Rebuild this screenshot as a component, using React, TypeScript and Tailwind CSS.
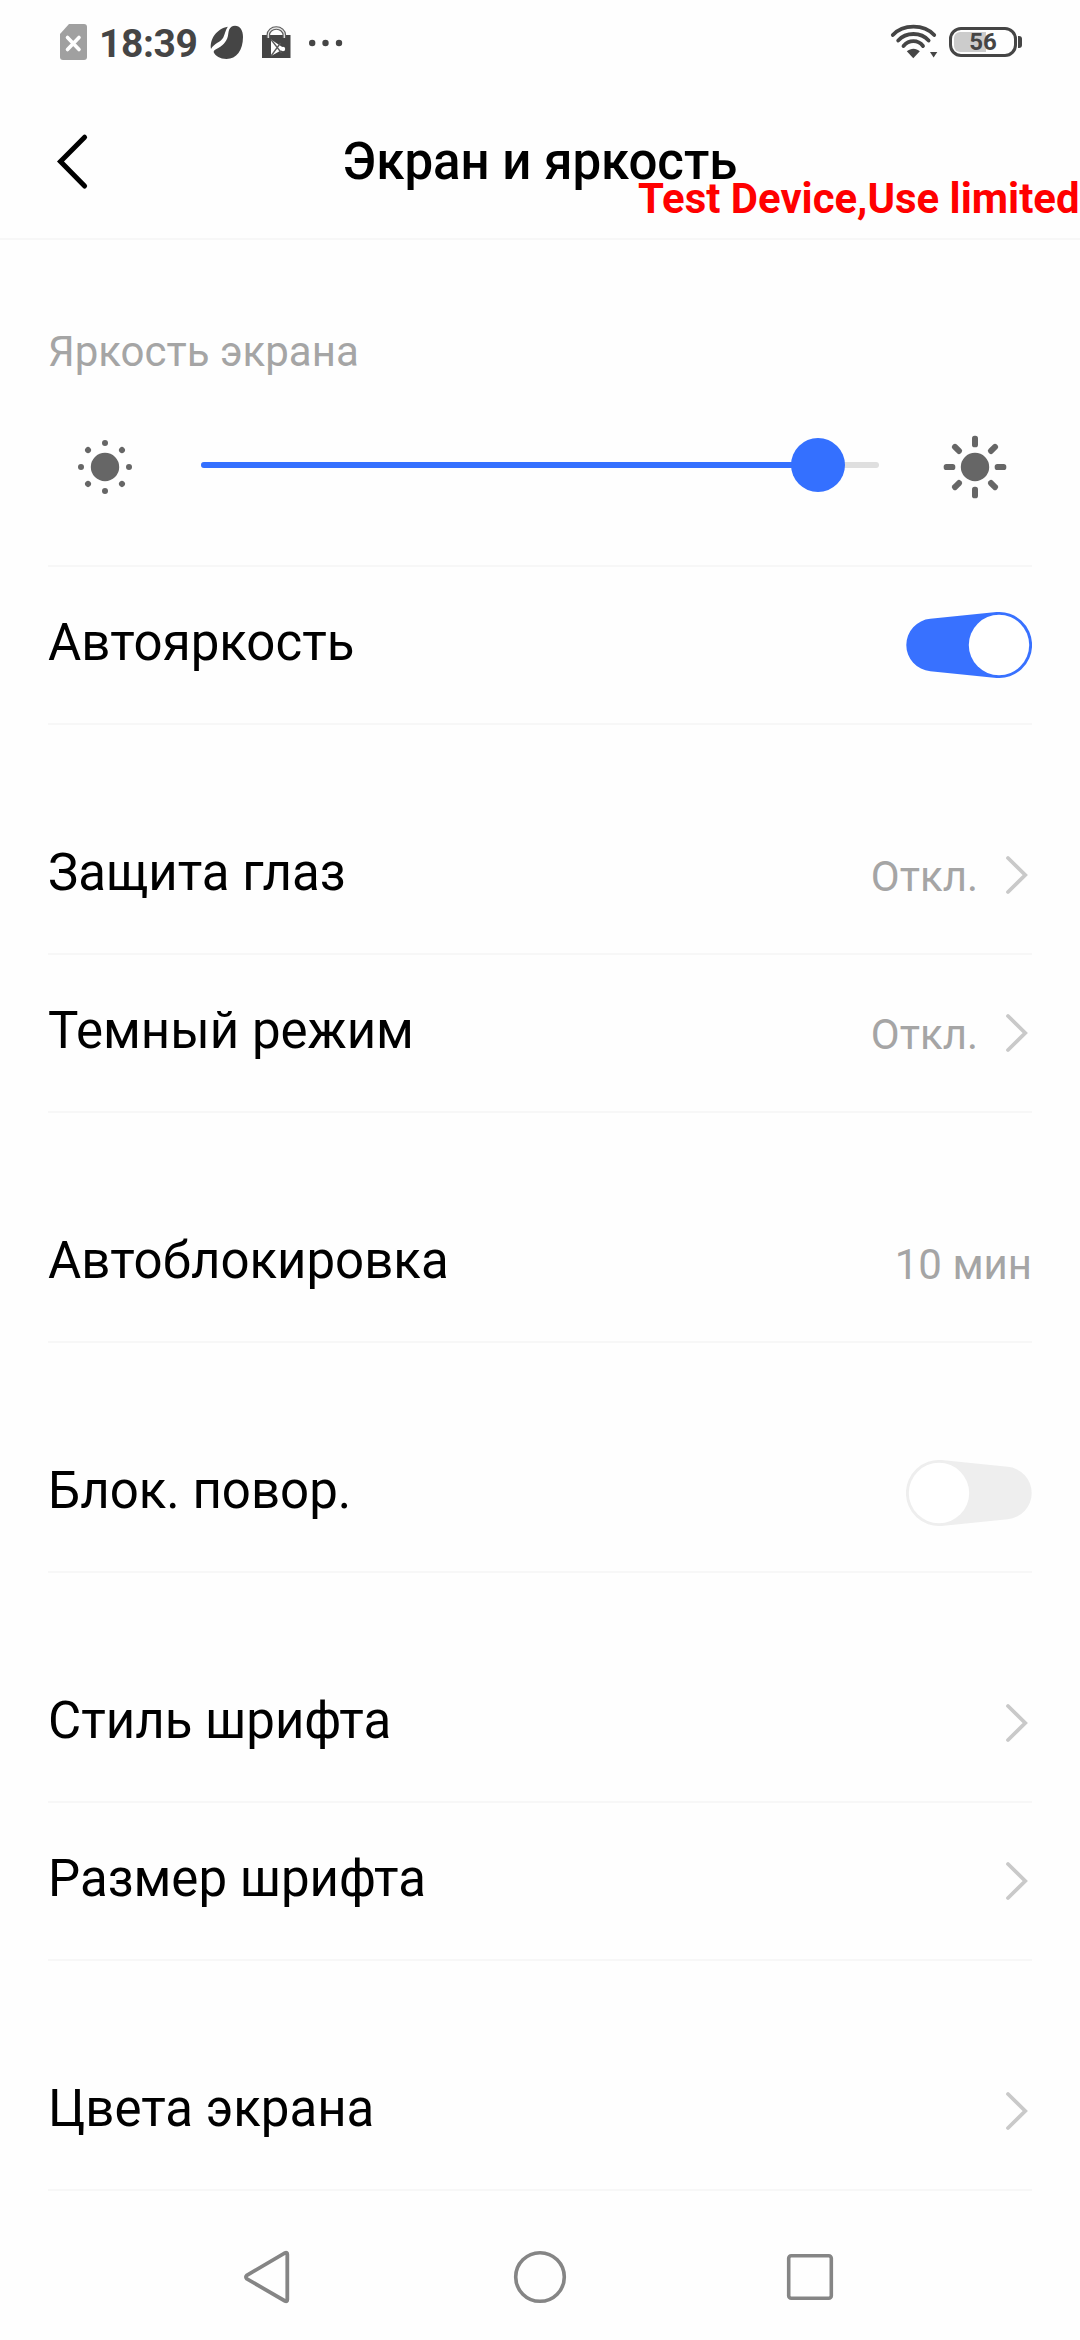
import type { ReactNode } from "react";

function StatusBar() {
  return (
    <div className="flex h-[84px] items-start justify-between pt-[22px] pr-[58px] pl-[58px] text-[#454545]">
      <div className="flex h-[40px] items-start">
        <svg className="h-[40px] w-[32px]" viewBox="58 22 32 40">
          <path d="M69 24H84a3 3 0 0 1 3 3V57a3 3 0 0 1-3 3H63a3 3 0 0 1-3-3V34Z" fill="#a0a0a0" />
          <path d="M67.5 37.5l11.5 12M79 37.5l-11.5 12" stroke="#fff" strokeWidth="3.6" strokeLinecap="round" />
        </svg>
        <span className="mt-[1px] ml-[9px] w-[101px] text-[39px] leading-[42px] font-bold tracking-[-0.4px]">18:39</span>
        <svg className="ml-[8px] h-[40px] w-[38px]" viewBox="208 22 38 40" fill="currentColor">
          <path d="M229.200 29.500C230.500 27 232 25.700 235 25.700C240 25.700 243 30 243 37C243 50 236.500 59 226.500 59C220 59 215.500 56 213.800 52.500C213.500 51 214 50.400 216 49.300C222.500 46 226.500 42 227.800 36.500C228.300 34 228.500 31.500 229.200 29.500Z" />
          <path d="M211 48.900C209.500 39 217 28.500 227.800 26.800C225.500 30 225 34 223.300 37.500C221 42 214 43.500 211 48.900Z" />
        </svg>
        <svg className="ml-[13px] h-[40px] w-[34px]" viewBox="259 22 34 40">
          <path d="M262 35H290.500V58H262Z" fill="currentColor" />
          <path d="M268.300 38V35a8 7 0 0 1 16 0V38" fill="none" stroke="#5c5c5c" strokeWidth="3.600" />
          <path d="M268.300 38V35a8 7 0 0 1 16 0V38" fill="none" stroke="#e4e4e4" strokeWidth="1.300" />
          <path d="M271 39.500V56L284.500 48.500Z" fill="#fff" />
          <path d="M271 39.500L281.500 53M271 56L280.500 43" stroke="#5a5a5a" strokeWidth="1.300" />
          <circle cx="283" cy="49" r="2.200" fill="#fff" />
        </svg>
        <svg className="ml-[16px] h-[40px] w-[36px]" viewBox="309 22 36 40">
          <circle cx="312.200" cy="43" r="3.200" fill="currentColor" />
          <circle cx="325.500" cy="43" r="3.200" fill="currentColor" />
          <circle cx="339" cy="43" r="3.200" fill="currentColor" />
        </svg>
      </div>
      <div className="flex h-[40px] items-start">
        <svg className="h-[40px] w-[52px]" viewBox="888 22 52 40">
          <g fill="none" stroke="currentColor" strokeWidth="3.800" strokeLinecap="round">
            <path d="M891.800 35C902 23.800 923 23.800 933.200 35" />
            <path d="M897.200 40.500C905 31.800 920 31.800 927.600 40.500" />
            <path d="M902.500 46C908 39.600 917 39.600 922 46" />
          </g>
          <path d="M905.800 51.300C910 47.800 915 47.800 918.800 51.300L912.300 58.300Z" fill="currentColor" />
          <path d="M929 52H936.300L932.600 57.500Z" fill="currentColor" />
        </svg>
        <div className="mt-[5px] ml-[8px] flex items-center">
          <div className="relative flex h-[30px] w-[68px] items-center justify-center rounded-[12px] border-[3px] border-[#454545]">
            <div className="absolute top-[2px] left-[2px] h-[20px] w-[32px] rounded-l-[6px] bg-[#cccccc]" />
            <span className="relative text-[24px] leading-[25px] font-bold">56</span>
          </div>
          <div className="ml-[1px] h-[12px] w-[4px] rounded-r-[3px] bg-[#454545]" />
        </div>
      </div>
    </div>
  );
}

function Header() {
  return (
    <header className="relative flex h-[156px] items-start justify-center border-b-2 border-[#f7f7f7] pt-[48px]">
      <button aria-label="Назад" className="absolute top-[48px] left-[50px]">
        <svg className="h-[60px] w-[44px]" viewBox="50 132 44 60" fill="none">
          <path d="M84.600 137.200L60.500 161.600L84.600 186" stroke="#000" strokeWidth="5" strokeLinecap="round" />
        </svg>
      </button>
      <h1 className="text-[51px] leading-[60px] font-medium">Экран и яркость</h1>
      <div className="absolute top-[90px] left-[638px] text-[41.900px] leading-[50px] font-bold whitespace-nowrap text-[#ff0000]">
        Test Device,Use limited
      </div>
    </header>
  );
}

const DIRECTIONS = [0, 45, 90, 135, 180, 225, 270, 315];

function DimSun() {
  return (
    <svg className="h-[66px] w-[66px]" viewBox="-33 -33 66 66" fill="#666666">
      <circle r="14.200" />
      {DIRECTIONS.map((a) => (
        <circle key={a} cy="-24" r="3" transform={`rotate(${a})`} />
      ))}
    </svg>
  );
}

function BrightSun() {
  return (
    <svg className="h-[66px] w-[66px]" viewBox="-33 -33 66 66" fill="#666666">
      <circle r="14.200" />
      {DIRECTIONS.map((a) => (
        <rect key={a} x="-3" y="-31.300" width="6" height="11.600" rx="2.600" transform={`rotate(${a})`} />
      ))}
    </svg>
  );
}

function Brightness() {
  return (
    <section className="mx-[48px] h-[327px] border-b-2 border-[#f7f7f7] pt-[87px]">
      <h2 className="text-[42px] leading-[50px] text-[#a5a5a5]">Яркость экрана</h2>
      <div className="mt-[57px] flex h-[66px] items-center pl-[24px]">
        <DimSun />
        <div className="relative mb-[4px] ml-[63px] h-[6px] w-[678px] rounded-full bg-[#dfdfdf]">
          <div className="h-[6px] w-[617px] rounded-full bg-[#3470ff]" />
          <div className="absolute top-[-24px] left-[590px] size-[54px] rounded-full bg-[#3470ff]" />
        </div>
        <div className="ml-[63px]">
          <BrightSun />
        </div>
      </div>
    </section>
  );
}

function Toggle({ on }: { on: boolean }) {
  return (
    <svg className={on ? "h-[66px] w-[126px]" : "h-[66px] w-[126px] -scale-x-100"} viewBox="0 0 126 66">
      <path
        d="M24.300 6.800L90.500 .1A33 33 0 1 1 90.500 65.900L24.300 59.200A26.300 26.300 0 0 1 24.300 6.800Z"
        fill={on ? "#3871ff" : "#eeeeee"}
      />
      <circle cx="93" cy="33" r="30.200" fill="#fff" />
    </svg>
  );
}

function Chevron() {
  return (
    <svg className="h-[42px] w-[28px]" viewBox="0 0 28 42" fill="none">
      <path d="M4 4L21.200 21L4 38" stroke="#c9c9c9" strokeWidth="3.800" strokeLinecap="round" />
    </svg>
  );
}

function Row({ label, gap, children }: { label: string; gap?: boolean; children: ReactNode }) {
  return (
    <div
      className={
        gap
          ? "mx-[48px] mt-[72px] flex h-[158px] items-center justify-between border-b-2 border-[#f7f7f7]"
          : "mx-[48px] flex h-[158px] items-center justify-between border-b-2 border-[#f7f7f7]"
      }
    >
      <span className="pb-1 text-[51px] leading-[60px]">{label}</span>
      <div className="flex items-center gap-[26px]">{children}</div>
    </div>
  );
}

function Value({ children }: { children: ReactNode }) {
  return <span className="pt-1 text-[42px] leading-[50px] text-[#a5a5a5]">{children}</span>;
}

function NavBar() {
  return (
    <nav className="flex h-[149px] items-start justify-center gap-[210px] pt-[56px]">
      <svg className="h-[60px] w-[60px]" viewBox="240 2247 60 60" fill="none" stroke="#858585" strokeWidth="3.800">
        <path d="M246.800 2275.300L285 2252.900Q287.300 2252 287.300 2254.500V2299.500Q287.300 2302 285 2301L246.800 2278.800Q245 2277 246.800 2275.300Z" />
      </svg>
      <svg className="h-[60px] w-[60px]" viewBox="-30 -30 60 60" fill="none" stroke="#858585" strokeWidth="3.600">
        <circle r="24.300" />
      </svg>
      <svg className="h-[60px] w-[60px]" viewBox="-30 -30 60 60" fill="none" stroke="#858585" strokeWidth="3.600">
        <rect x="-21.300" y="-21.300" width="42.600" height="42.600" rx="2.500" />
      </svg>
    </nav>
  );
}

export default function App() {
  return (
    <div className="h-[2340px] w-[1080px] overflow-hidden bg-[#fefefe] font-[Roboto,sans-serif] text-black">
      <StatusBar />
      <Header />
      <main className="h-[1951px]">
        <Brightness />
        <Row label="Автояркость">
          <Toggle on />
        </Row>
        <Row label="Защита глаз" gap>
          <Value>Откл.</Value>
          <Chevron />
        </Row>
        <Row label="Темный режим">
          <Value>Откл.</Value>
          <Chevron />
        </Row>
        <Row label="Автоблокировка" gap>
          <Value>10 мин</Value>
        </Row>
        <Row label="Блок. повор." gap>
          <Toggle on={false} />
        </Row>
        <Row label="Стиль шрифта" gap>
          <Chevron />
        </Row>
        <Row label="Размер шрифта">
          <Chevron />
        </Row>
        <Row label="Цвета экрана" gap>
          <Chevron />
        </Row>
      </main>
      <NavBar />
    </div>
  );
}
